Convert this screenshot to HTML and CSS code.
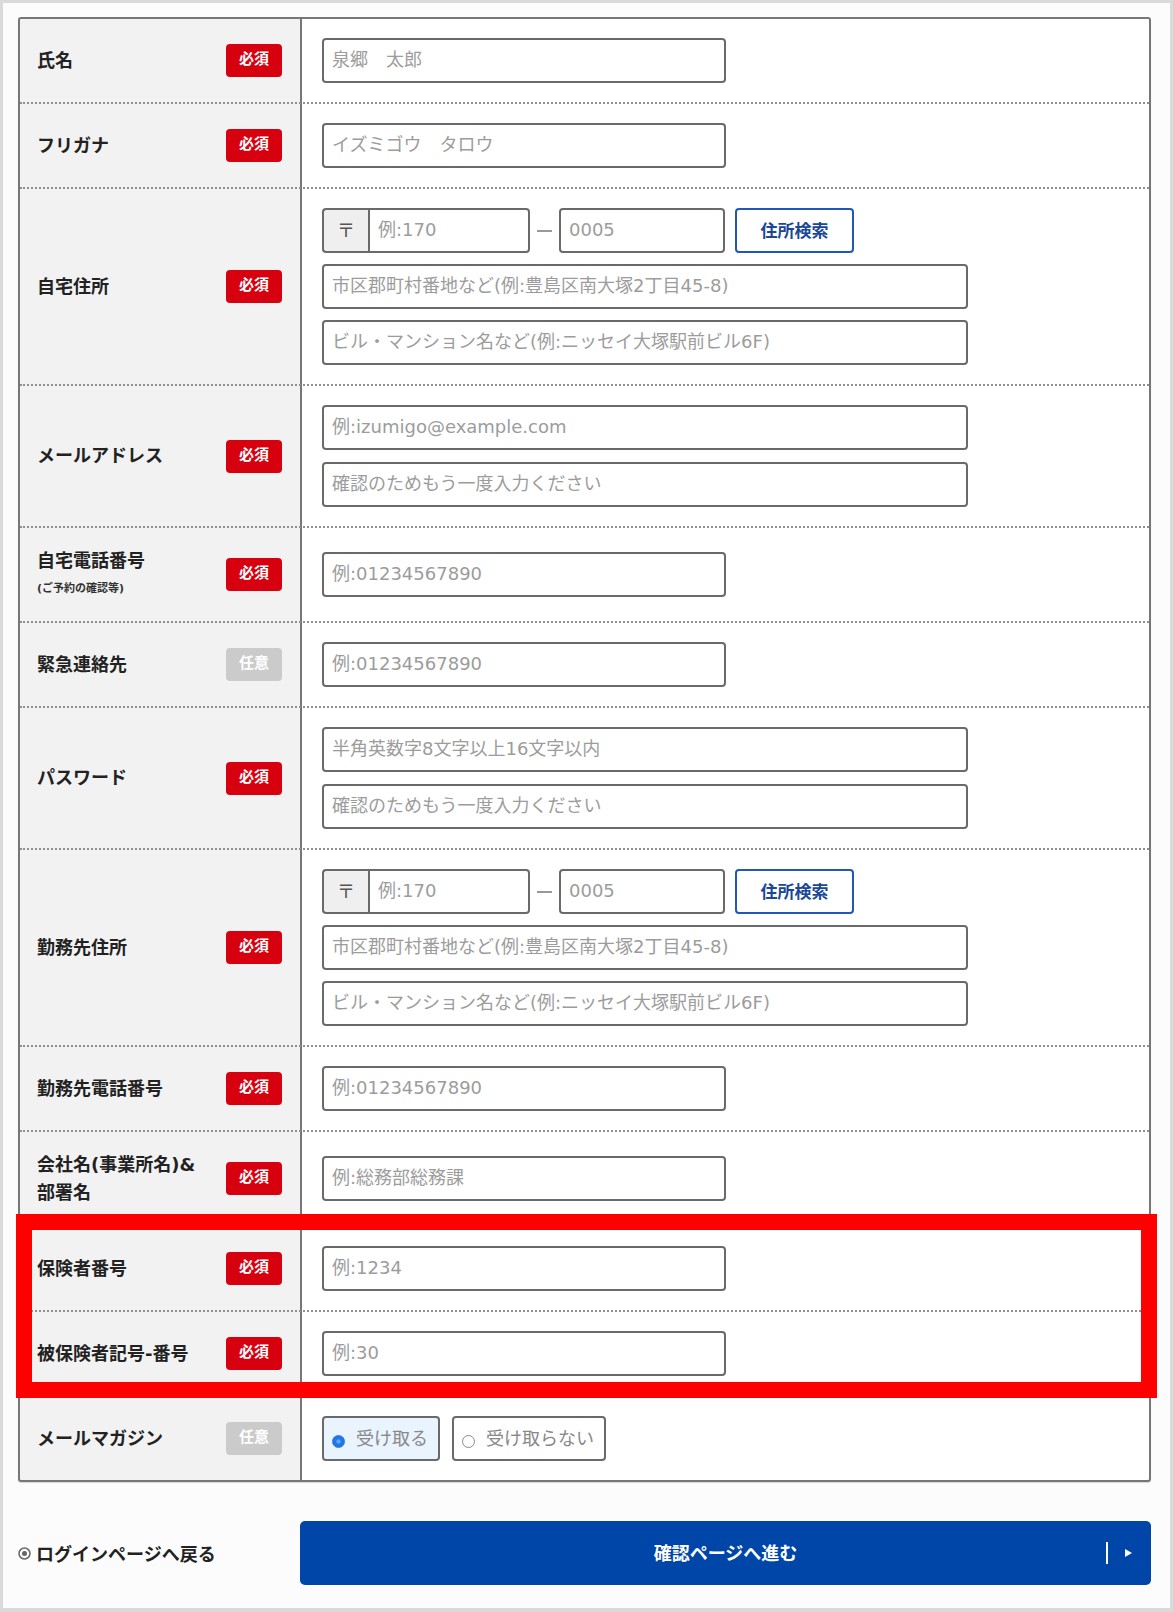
FILE: index.html
```html
<!DOCTYPE html>
<html lang="ja">
<head>
<meta charset="utf-8">
<title>会員登録</title>
<link rel="stylesheet" href="styles.css">
</head>
<body>
<div class="page">
  <form class="form-table">
    <div class="row">
      <div class="label"><span class="label-text">氏名</span><span class="badge">必須</span></div>
      <div class="value"><input class="field" type="text" placeholder="泉郷　太郎"></div>
    </div>
    <div class="row">
      <div class="label"><span class="label-text">フリガナ</span><span class="badge">必須</span></div>
      <div class="value"><input class="field" type="text" placeholder="イズミゴウ　タロウ"></div>
    </div>
    <div class="row">
      <div class="label"><span class="label-text">自宅住所</span><span class="badge">必須</span></div>
      <div class="value">
        <div class="zip">
          <span class="zip-mark">〒</span>
          <input class="field zip-first" type="text" placeholder="例:170">
          <span class="zip-dash"></span>
          <input class="field zip-second" type="text" placeholder="0005">
          <button class="zip-search" type="button">住所検索</button>
        </div>
        <input class="field field-wide" type="text" placeholder="市区郡町村番地など(例:豊島区南大塚2丁目45-8)">
        <input class="field field-wide" type="text" placeholder="ビル・マンション名など(例:ニッセイ大塚駅前ビル6F)">
      </div>
    </div>
    <div class="row">
      <div class="label"><span class="label-text">メールアドレス</span><span class="badge">必須</span></div>
      <div class="value value-double">
        <input class="field field-wide" type="text" placeholder="例:izumigo@example.com">
        <input class="field field-wide" type="text" placeholder="確認のためもう一度入力ください">
      </div>
    </div>
    <div class="row">
      <div class="label"><span class="label-text"><span class="label-title">自宅電話番号</span><span class="label-note">(ご予約の確認等)</span></span><span class="badge">必須</span></div>
      <div class="value"><input class="field" type="text" placeholder="例:01234567890"></div>
    </div>
    <div class="row">
      <div class="label"><span class="label-text">緊急連絡先</span><span class="badge badge-optional">任意</span></div>
      <div class="value"><input class="field" type="text" placeholder="例:01234567890"></div>
    </div>
    <div class="row">
      <div class="label"><span class="label-text">パスワード</span><span class="badge">必須</span></div>
      <div class="value value-double">
        <input class="field field-wide" type="text" placeholder="半角英数字8文字以上16文字以内">
        <input class="field field-wide" type="text" placeholder="確認のためもう一度入力ください">
      </div>
    </div>
    <div class="row">
      <div class="label"><span class="label-text">勤務先住所</span><span class="badge">必須</span></div>
      <div class="value">
        <div class="zip">
          <span class="zip-mark">〒</span>
          <input class="field zip-first" type="text" placeholder="例:170">
          <span class="zip-dash"></span>
          <input class="field zip-second" type="text" placeholder="0005">
          <button class="zip-search" type="button">住所検索</button>
        </div>
        <input class="field field-wide" type="text" placeholder="市区郡町村番地など(例:豊島区南大塚2丁目45-8)">
        <input class="field field-wide" type="text" placeholder="ビル・マンション名など(例:ニッセイ大塚駅前ビル6F)">
      </div>
    </div>
    <div class="row">
      <div class="label"><span class="label-text">勤務先電話番号</span><span class="badge">必須</span></div>
      <div class="value"><input class="field" type="text" placeholder="例:01234567890"></div>
    </div>
    <div class="row">
      <div class="label"><span class="label-text">会社名(事業所名)&amp;<br>部署名</span><span class="badge">必須</span></div>
      <div class="value"><input class="field" type="text" placeholder="例:総務部総務課"></div>
    </div>
    <div class="highlight">
      <div class="row">
        <div class="label"><span class="label-text">保険者番号</span><span class="badge">必須</span></div>
        <div class="value"><input class="field" type="text" placeholder="例:1234"></div>
      </div>
      <div class="row">
        <div class="label"><span class="label-text">被保険者記号-番号</span><span class="badge">必須</span></div>
        <div class="value"><input class="field" type="text" placeholder="例:30"></div>
      </div>
      <span class="highlight-frame"></span>
    </div>
    <div class="row">
      <div class="label"><span class="label-text">メールマガジン</span><span class="badge badge-optional">任意</span></div>
      <div class="value">
        <div class="radios">
          <label class="radio is-checked"><input type="radio" name="mag" checked><span>受け取る</span></label>
          <label class="radio"><input type="radio" name="mag"><span>受け取らない</span></label>
        </div>
      </div>
    </div>
  </form>
  <div class="footer">
    <a class="back-link" href="#">
      <svg class="back-icon" width="13" height="13" viewBox="0 0 13 13"><circle cx="6.5" cy="6.5" r="5.5" fill="none" stroke="#666" stroke-width="1.5"/><circle cx="6.5" cy="6.5" r="2.5" fill="#666"/></svg>
      <span>ログインページへ戻る</span>
    </a>
    <button class="submit" type="button">確認ページへ進む<span class="submit-arrow"><span class="submit-sep"></span><span class="submit-tri"></span></span></button>
  </div>
</div>
</body>
</html>
```
FILE: styles.css
```css
html, body {
  margin: 0;
}
body {
  background: #dadada;
  padding: 3px 3px 4px 3px;
  font-family: "DejaVu Sans", "Noto Sans CJK JP", sans-serif;
  color: #222;
}
.page {
  background: #fcfcfc;
  min-height: 1605px;
  box-sizing: border-box;
  padding: 14px 19px 0 15px;
}
.form-table {
  display: block;
  margin: 0;
  border: 2px solid #777;
  border-radius: 3px;
  background: linear-gradient(to right, #f2f2f2 0, #f2f2f2 280px, #777 280px, #777 282px, #fff 282px);
  box-shadow: 0 1px 1px rgba(0, 0, 0, 0.15);
}
.row {
  display: flex;
  border-top: 2px dotted #8f8f8f;
}
.form-table > .row:first-child {
  border-top: 0;
}
.label {
  width: 282px;
  flex-shrink: 0;
  box-sizing: border-box;
  padding: 19px 20px 19px 17px;
  display: flex;
  align-items: center;
  justify-content: space-between;
  gap: 8px;
  font-size: 18px;
  font-weight: bold;
  line-height: 27.5px;
  color: #222;
}
.label-title,
.label-note {
  display: block;
}
.label-note {
  font-size: 11px;
  line-height: 27.5px;
  color: #333;
}
.badge {
  flex-shrink: 0;
  width: 56px;
  height: 33px;
  padding-bottom: 2px;
  box-sizing: border-box;
  border-radius: 4px;
  background: #d7000f;
  color: #fff;
  font-size: 15px;
  font-weight: bold;
  line-height: 1;
  display: flex;
  align-items: center;
  justify-content: center;
}
.badge-optional {
  background: #cbcbcb;
}
.value {
  flex: 1;
  padding: 19px 20px;
  display: flex;
  flex-direction: column;
  justify-content: center;
  align-items: flex-start;
  gap: 11px;
}
.value-double {
  gap: 12px;
}
.field {
  box-sizing: border-box;
  width: 404px;
  height: 45px;
  margin: 0;
  border: 2px solid #6a6a6a;
  border-radius: 4px;
  padding: 0 8px 3px 8px;
  background: #fff;
  font: 18px "DejaVu Sans", "Noto Sans CJK JP", sans-serif;
  color: #333;
}
.field::placeholder {
  color: #9c9c9c;
}
.field-wide {
  width: 646px;
}
.zip {
  display: flex;
  align-items: center;
}
.zip-mark {
  box-sizing: border-box;
  width: 46px;
  height: 45px;
  padding-bottom: 3px;
  border: 2px solid #6a6a6a;
  border-right: 0;
  border-radius: 4px 0 0 4px;
  background: #efefef;
  display: flex;
  align-items: center;
  justify-content: center;
  font-size: 18px;
  color: #555;
}
.zip-first {
  width: 162px;
  border-radius: 0 4px 4px 0;
}
.zip-dash {
  width: 15px;
  height: 2px;
  margin: 0 7px;
  background: #999;
}
.zip-second {
  width: 166px;
}
.zip-search {
  box-sizing: border-box;
  width: 119px;
  height: 45px;
  margin-left: 10px;
  padding-bottom: 3px;
  border: 2px solid #2157b5;
  border-radius: 4px;
  background: #fff;
  color: #1a4796;
  font: bold 17px "DejaVu Sans", "Noto Sans CJK JP", sans-serif;
}
.radios {
  display: flex;
  gap: 12px;
}
.radio {
  box-sizing: border-box;
  height: 45px;
  display: inline-flex;
  align-items: center;
  gap: 11px;
  padding: 0 10px 3px 8px;
  border: 2px solid #6a6a6a;
  border-radius: 4px;
  background: #fff;
  color: #888;
  font-size: 18px;
}
.radio.is-checked {
  background: #eaf4fe;
}
.radio input {
  appearance: none;
  -webkit-appearance: none;
  width: 13px;
  height: 13px;
  margin: 8px 0 0 0;
  border: 1px solid #8a8a8a;
  border-radius: 50%;
  background: #fff;
  box-sizing: border-box;
}
.radio input:checked {
  border-color: #1f78e6;
  background: radial-gradient(circle, #5fa6f5 0 25%, #1f78e6 30%);
}
.highlight {
  position: relative;
}
.highlight-frame {
  position: absolute;
  top: -11px;
  bottom: -3px;
  left: -4px;
  right: -8px;
  border: 16px solid #ff0000;
  pointer-events: none;
}
.footer {
  display: flex;
  align-items: center;
  margin-top: 39px;
}
.back-link {
  width: 282px;
  flex-shrink: 0;
  display: flex;
  align-items: center;
  gap: 5px;
  color: #222;
  text-decoration: none;
  font-size: 18px;
  font-weight: bold;
}
.back-icon {
  flex-shrink: 0;
}
.submit {
  position: relative;
  flex: 1;
  height: 64px;
  padding-bottom: 4px;
  border: 0;
  border-radius: 5px;
  background: #0046a9;
  color: #fff;
  font: bold 18px "DejaVu Sans", "Noto Sans CJK JP", sans-serif;
}
.submit-arrow {
  position: absolute;
  right: 19px;
  top: 50%;
  transform: translateY(-50%);
  display: flex;
  align-items: center;
  gap: 17px;
}
.submit-sep {
  width: 2px;
  height: 22px;
  background: #fff;
}
.submit-tri {
  width: 0;
  height: 0;
  border-left: 7px solid #fff;
  border-top: 4.5px solid transparent;
  border-bottom: 4.5px solid transparent;
}
```
